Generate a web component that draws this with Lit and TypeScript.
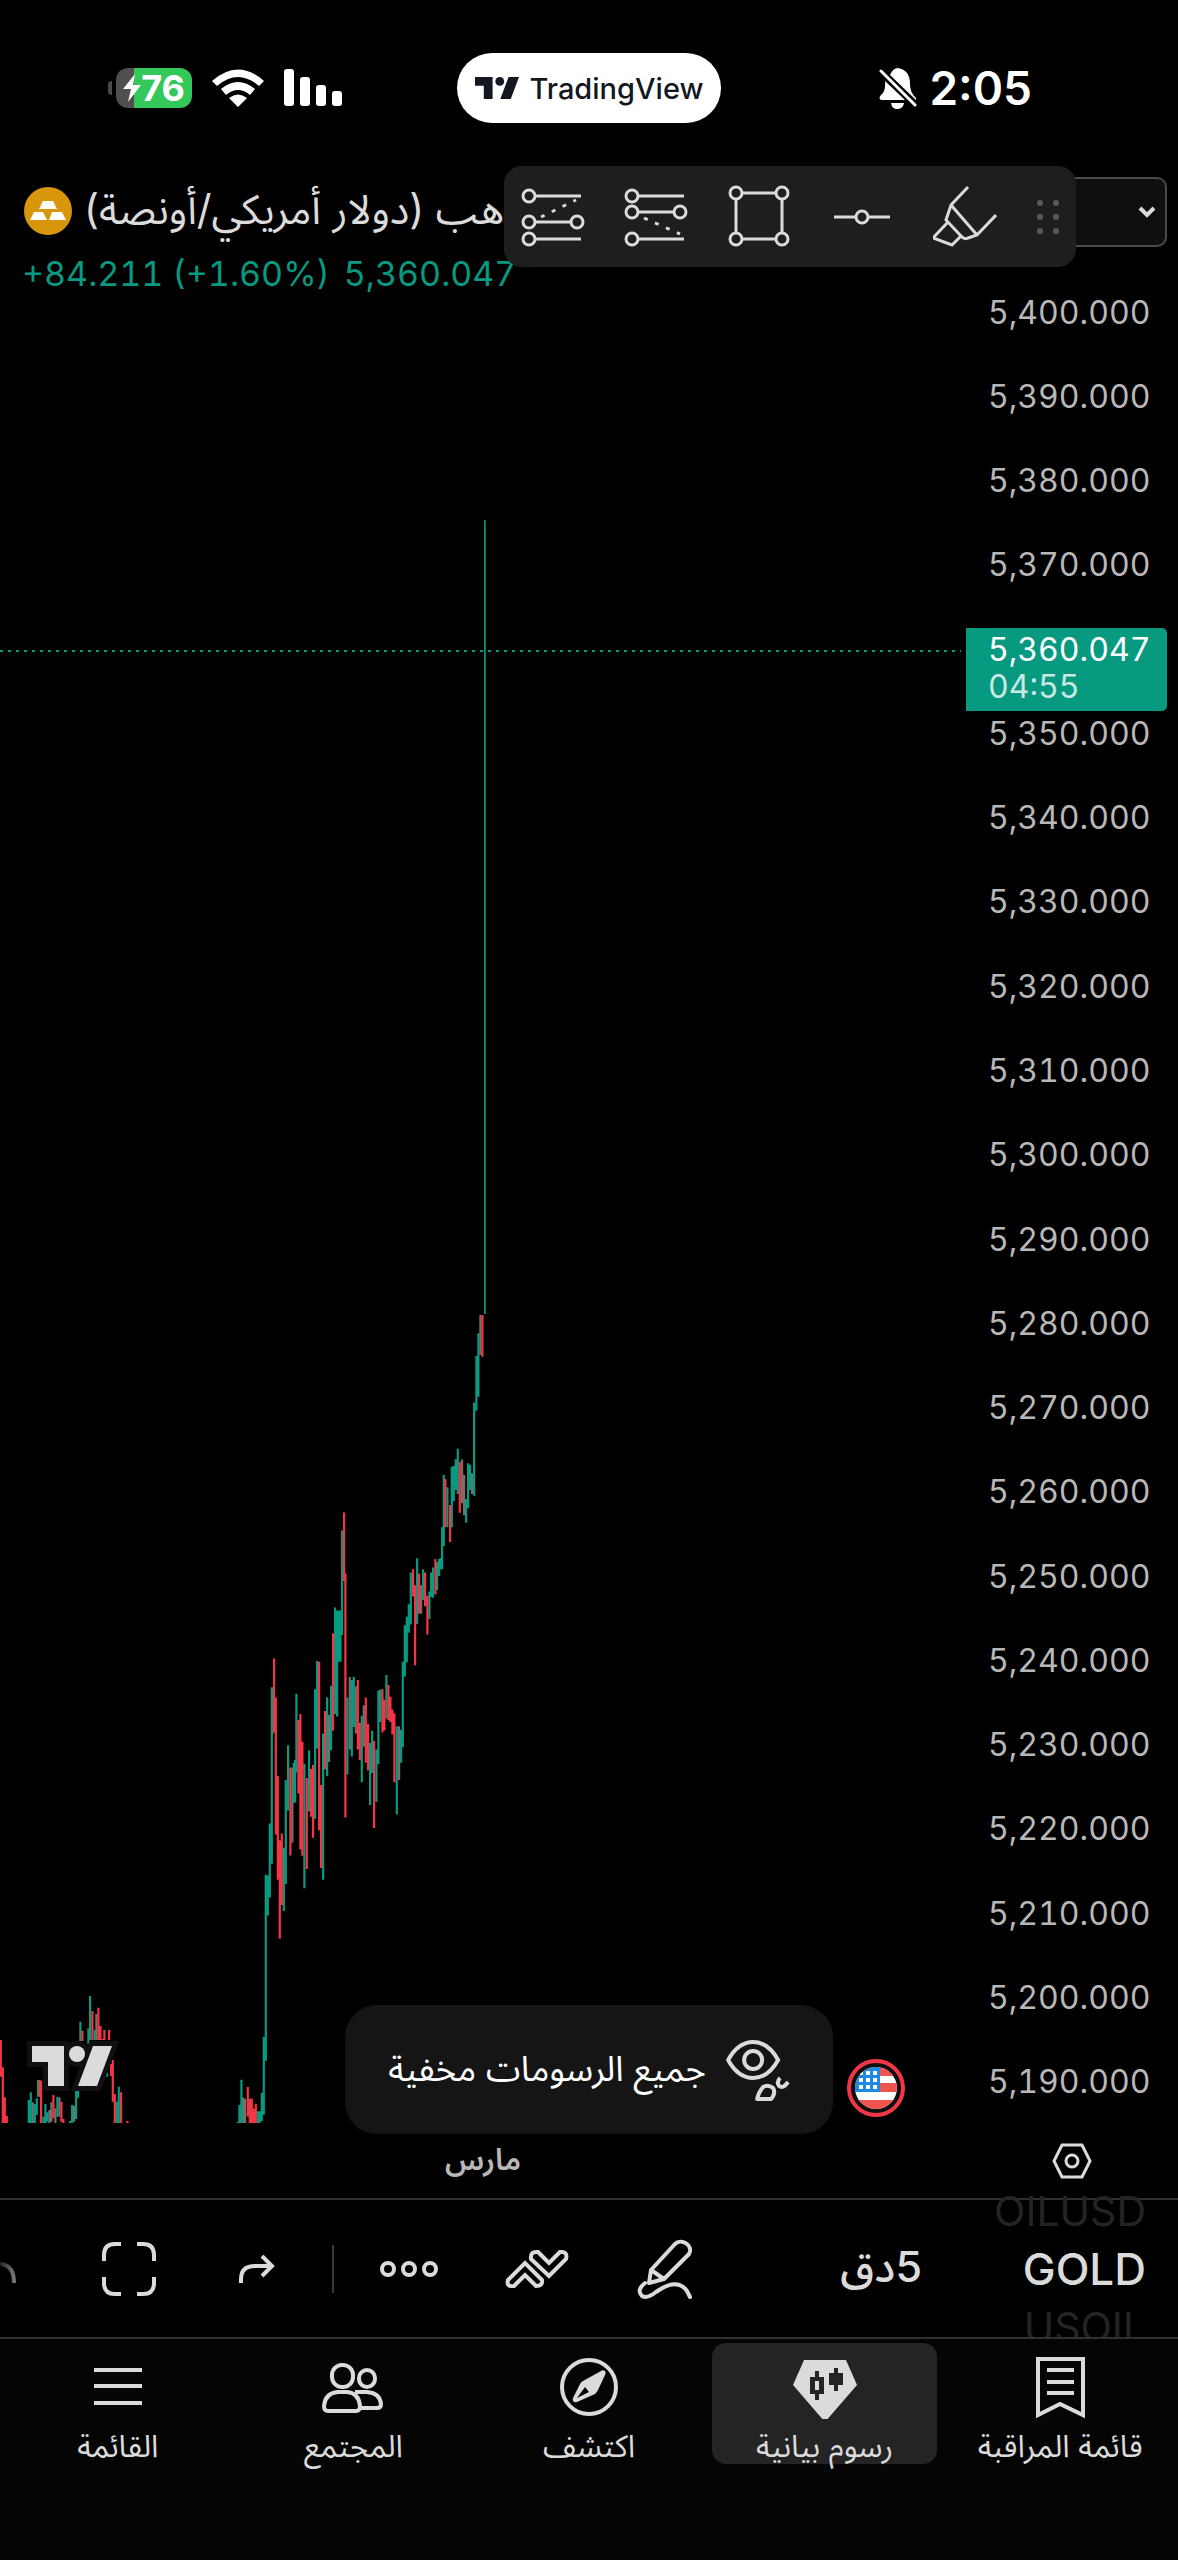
import { LitElement, html, svg, css } from "lit";
import { customElement } from "lit/decorators.js";

type Tone = "g" | "r" | "m";
type Bar = [number, number, number, Tone];

interface Series {
  x: number;
  y: number;
  unitY: number;
  bars: Bar[];
}

/* Bars are [x, high, low, tone] relative to each series origin: x in thirds, y in the series' own unit. */
const SERIES: Series[] = [
  {
    x: 0,
    y: 1940,
    unitY: 3,
    bars: [
      [-1, 300, 410, "r"], [5, 382, 550, "r"], [11, 472, 550, "r"], [17, 527, 550, "r"],
      [83, 480, 550, "g"], [89, 457, 550, "g"], [95, 487, 550, "m"], [101, 492, 550, "g"],
      [107, 475, 525, "g"], [111, 420, 470, "g"], [116, 420, 470, "r"], [120, 423, 550, "r"],
      [127, 530, 550, "g"], [133, 492, 550, "g"], [139, 517, 545, "g"], [145, 510, 550, "m"],
      [151, 487, 545, "m"], [157, 465, 535, "r"], [163, 505, 550, "m"], [169, 470, 530, "g"],
      [175, 472, 530, "m"], [181, 485, 545, "r"], [187, 537, 550, "r"], [207, 543, 550, "g"],
      [213, 495, 550, "g"], [219, 497, 545, "m"], [225, 453, 537, "g"], [231, 453, 473, "g"],
      [238, 245, 303, "g"], [244, 272, 303, "r"], [262, 265, 312, "g"], [267, 168, 300, "g"],
      [274, 213, 300, "r"], [281, 270, 300, "g"], [286, 222, 300, "m"], [292, 203, 300, "r"],
      [298, 258, 300, "r"], [304, 297, 300, "r"], [310, 270, 300, "r"], [324, 270, 300, "r"],
      [318, 398, 410, "g"], [330, 372, 408, "r"], [335, 360, 485, "r"], [341, 462, 550, "r"],
      [347, 485, 550, "g"], [353, 440, 550, "g"], [360, 457, 550, "r"], [379, 543, 550, "r"],
    ],
  },
  {
    x: 230,
    y: 1480,
    unitY: 2.376,
    bars: [
      [20, 1525, 1529, "g"], [25, 1485, 1529, "g"], [31, 1425, 1529, "g"], [36, 1467, 1529, "m"],
      [42, 1470, 1529, "m"], [50, 1442, 1512, "r"], [56, 1470, 1529, "r"], [62, 1470, 1529, "r"],
      [68, 1493, 1529, "r"], [74, 1482, 1529, "r"], [80, 1500, 1529, "g"], [86, 1500, 1527, "g"],
      [92, 1456, 1523, "g"], [98, 1323, 1508, "g"], [104, 938, 1380, "g"], [110, 940, 1035, "g"],
      [116, 816, 992, "g"], [122, 493, 912, "g"], [124, 493, 605, "m"], [129, 424, 600, "r"],
      [134, 517, 842, "r"], [140, 703, 950, "r"], [146, 856, 1090, "r"], [152, 840, 1010, "r"],
      [158, 874, 1024, "g"], [164, 713, 960, "g"], [171, 630, 785, "g"], [178, 683, 892, "r"],
      [184, 683, 862, "m"], [188, 672, 767, "g"], [192, 665, 767, "g"], [196, 508, 695, "g"],
      [202, 570, 745, "r"], [208, 556, 878, "r"], [214, 622, 893, "r"], [220, 674, 970, "g"],
      [227, 708, 924, "r"], [234, 642, 788, "g"], [240, 687, 800, "r"], [246, 677, 850, "r"],
      [252, 497, 805, "g"], [258, 430, 638, "g"], [264, 432, 832, "r"], [270, 725, 922, "r"],
      [276, 602, 950, "g"], [282, 549, 688, "r"], [288, 516, 704, "g"], [294, 558, 670, "m"],
      [300, 489, 642, "g"], [306, 364, 596, "r"], [312, 303, 556, "g"], [318, 310, 562, "g"],
      [324, 310, 432, "g"], [328, 310, 432, "g"], [333, 120, 368, "g"], [336, 120, 240, "m"],
      [339, 77, 240, "r"], [343, 222, 802, "r"], [349, 517, 700, "g"], [356, 468, 640, "m"],
      [362, 475, 657, "g"], [368, 468, 587, "g"], [374, 490, 602, "m"], [380, 475, 640, "r"],
      [386, 577, 665, "r"], [392, 560, 718, "g"], [398, 535, 633, "m"], [404, 517, 672, "r"],
      [411, 580, 690, "r"], [417, 625, 772, "g"], [423, 596, 696, "g"], [429, 620, 827, "r"],
      [436, 640, 765, "g"], [442, 500, 675, "g"], [448, 498, 575, "g"], [454, 497, 600, "r"],
      [460, 522, 595, "r"], [466, 463, 567, "g"], [472, 487, 570, "r"], [478, 515, 575, "r"],
      [484, 545, 605, "r"], [490, 555, 718, "r"], [497, 585, 795, "g"], [504, 585, 713, "m"],
      [510, 594, 672, "g"], [515, 432, 635, "g"], [521, 345, 467, "g"], [527, 325, 433, "g"],
      [533, 295, 363, "g"], [539, 220, 343, "g"], [546, 212, 277, "r"], [552, 250, 440, "r"],
      [558, 186, 342, "g"], [564, 222, 318, "r"], [570, 250, 318, "m"], [576, 212, 285, "g"],
      [582, 220, 300, "r"], [589, 275, 367, "r"], [595, 265, 330, "g"], [600, 220, 278, "g"],
      [606, 208, 280, "g"], [613, 188, 272, "r"], [618, 195, 262, "g"], [624, 187, 228, "g"],
      [630, 185, 212, "g"],
    ],
  },
  {
    x: 390,
    y: 1290,
    unitY: 3,
    bars: [
      [153, 712, 838, "g"], [158, 555, 768, "g"], [163, 567, 712, "r"], [169, 592, 712, "g"],
      [177, 645, 756, "r"], [178, 645, 712, "m"], [182, 530, 712, "g"], [188, 527, 633, "g"],
      [194, 508, 600, "g"], [200, 476, 612, "g"], [206, 515, 668, "r"], [213, 508, 640, "m"],
      [219, 555, 676, "m"], [225, 627, 698, "g"], [231, 520, 655, "g"], [237, 524, 600, "g"],
      [243, 550, 612, "m"], [249, 338, 617, "g"], [256, 198, 362, "g"], [262, 130, 320, "g"],
      [268, 75, 195, "m"], [274, 75, 200, "r"], [282, -2309, 72, "g"],
    ],
  },
];

const barPath = (tone: Tone): string =>
  SERIES.map((s) =>
    s.bars
      .filter((b) => b[3] === tone)
      .map(([x, top, bottom]) => {
        const width = top < 0 ? 1.7 : 2.2;
        const high = (s.y + top / s.unitY).toFixed(1);
        const low = (s.y + bottom / s.unitY).toFixed(1);
        return `M${(s.x + x / 3).toFixed(1)} ${high}h${width}V${low}h-${width}z`;
      })
      .join(""),
  ).join("");

const PRICES = Array.from({ length: 22 }, (_, i) => 5400 - i * 10);
const CURRENT = 5360;

const tvMark = svg`<path d="M0 0H32V40H16V16H0z"/><circle cx="45" cy="8" r="8"/><path d="M61 0H80L65 40H46z"/>`;

const toolIcons = [
  {
    name: "مركز شراء",
    art: svg`<path d="M14 11H60M14 37H50M14 54H60"/><path class="dots" d="M20 32L55 15"/>
      <circle cx="8" cy="11" r="6"/><circle cx="8" cy="37" r="6"/><circle cx="56" cy="37" r="6"/><circle cx="8" cy="54" r="6"/>`,
  },
  {
    name: "مركز بيع",
    art: svg`<path d="M14 11H60M14 27H50M14 54H60"/><path class="dots" d="M20 33L56 49"/>
      <circle cx="8" cy="11" r="6"/><circle cx="8" cy="27" r="6"/><circle cx="56" cy="27" r="6"/><circle cx="8" cy="54" r="6"/>`,
  },
  {
    name: "مستطيل",
    art: svg`<path d="M15 8H49M15 54H49M9 14V48M55 14V48"/>
      <circle cx="9" cy="8" r="6"/><circle cx="55" cy="8" r="6"/><circle cx="9" cy="54" r="6"/><circle cx="55" cy="54" r="6"/>`,
  },
  {
    name: "خط أفقي",
    art: svg`<path d="M4 32H26M38 32H60"/><circle cx="32" cy="32" r="6"/>`,
  },
  {
    name: "قلم تمييز",
    art: svg`<path d="M35 2L18 20L13 35L28 51Q31 55 35 53L44 50L63 30M18 20L44 50M15 37L0 53L19 60L28 51"/>`,
  },
];

const navItems = [
  {
    label: "قائمة المراقبة",
    active: false,
    art: svg`<g class="line"><path d="M10 4H55V60L32 49L10 60z"/><path d="M19 15H46M19 27H46M19 38H46"/></g>`,
  },
  {
    label: "رسوم بيانية",
    active: true,
    art: svg`<path d="M11 5H53L64 30L32 67L0 30z"/>
      <path class="cut" d="M22 16h4v6h5v17h-5v6h-4v-6h-5V22h5zM41 13h4v5h5v12h-5v6h-4v-6h-5V18h5z"/><path d="M22 26h4v9h-4z"/>`,
  },
  {
    label: "اكتشف",
    active: false,
    art: svg`<circle class="line" cx="32" cy="32" r="27"/>
      <path fill-rule="evenodd" d="M44 16C47 14 50 17 48 20L41 35Q40 37 38 39L20 47C17 48 15 46 16 43L23 29Q24 27 26 26zM28 32L20 43L32 37z"/>`,
  },
  {
    label: "المجتمع",
    active: false,
    art: svg`<g class="line"><rect x="11" y="10" width="21" height="22" rx="10"/><rect x="38" y="15" width="16" height="17" rx="8"/>
      <path d="M7 56Q3 56 3 51Q4 38 17 37H26Q38 38 39 51Q39 56 35 56zM34 37H46Q59 38 60 49Q60 53 56 53H39"/></g>`,
  },
  {
    label: "القائمة",
    active: false,
    art: svg`<path class="line" d="M8 15H56M8 31H56M8 48H56"/>`,
  },
];

@customElement("app-root")
export class AppRoot extends LitElement {
  static styles = css`
    :host {
      display: block;
      background: #000;
      color: #dbdbdb;
      font-family: Inter, "Noto Sans Arabic", "Noto Sans", "DejaVu Sans", sans-serif;
    }
    * {
      box-sizing: border-box;
    }
    svg {
      display: block;
      flex: none;
      fill: currentColor;
    }
    button,
    select {
      appearance: none;
      border: 0;
      margin: 0;
      padding: 0;
      background: none;
      color: inherit;
      font: inherit;
      cursor: pointer;
    }
    .screen {
      display: flex;
      flex-direction: column;
      min-height: 100vh;
      overflow: hidden;
    }
    .status {
      display: grid;
      grid-template-columns: 1fr auto 1fr;
      align-items: center;
      padding: 53px 108px 27px;
      color: #fff;
    }
    .status-side {
      display: flex;
      align-items: center;
      gap: 20px;
    }
    .status-end {
      justify-content: flex-end;
      gap: 12px;
      padding-right: 38px;
    }
    .battery {
      display: flex;
      align-items: center;
      gap: 4px;
    }
    .nub {
      width: 4px;
      height: 14px;
      border-radius: 4px 0 0 4px;
      background: #4a4a4c;
    }
    .cell {
      display: flex;
      align-items: center;
      justify-content: flex-end;
      width: 76px;
      height: 40px;
      padding-right: 7px;
      border-radius: 12px;
      background: linear-gradient(to right, #4f4f51 18px, #34c759 18px);
      font-size: 36px;
      font-weight: 700;
      line-height: 40px;
    }
    .pill {
      display: flex;
      align-items: center;
      justify-content: center;
      gap: 11px;
      height: 70px;
      padding: 0 18px;
      border-radius: 35px;
      background: #fff;
      color: #131722;
      font-size: 29px;
      font-weight: 500;
    }
    .clock {
      font-size: 46px;
      font-weight: 600;
      line-height: 56px;
    }
    .chart {
      position: relative;
      display: flex;
      flex: 1;
      min-height: 1200px;
    }
    .plot {
      position: relative;
      flex: 1;
      min-width: 0;
    }
    .candles {
      position: absolute;
      inset: 0;
      width: 100%;
      height: 100%;
    }
    .up {
      fill: #089981;
    }
    .down {
      fill: #f23645;
    }
    .mixed {
      fill: #786f6b;
    }
    .last {
      fill: none;
      stroke: #089981;
      stroke-width: 2;
      stroke-dasharray: 3 5;
    }
    .legend {
      position: relative;
      display: flex;
      flex-direction: column;
      gap: 16px;
      padding: 37px 0 0 24px;
      white-space: nowrap;
    }
    .name {
      display: flex;
      align-items: center;
      gap: 12px;
      height: 48px;
      margin: 0;
      font-size: 41px;
      font-weight: 400;
    }
    .change {
      display: flex;
      gap: 14px;
      margin-left: -2px;
      font-size: 34px;
      font-variant-numeric: tabular-nums;
      line-height: 46px;
      color: #089981;
    }
    .scale {
      width: 212px;
      display: flex;
      flex-direction: column;
      padding: 27px 11px 0 0;
    }
    .currency {
      position: relative;
      display: flex;
    }
    .currency select {
      width: 100%;
      height: 70px;
      padding-left: 16px;
      border: 2px solid #4a4a4a;
      border-radius: 10px;
      background: #0f0f0f;
      font-size: 32px;
    }
    .chevron {
      position: absolute;
      right: 11px;
      top: 26px;
      pointer-events: none;
    }
    .prices {
      display: flex;
      flex: 1;
      flex-direction: column;
      margin: 22px 0 0;
      padding: 0;
      list-style: none;
      font-size: 32px;
      font-variant-numeric: tabular-nums;
      line-height: 37px;
      color: #b8b8b8;
    }
    .price {
      position: relative;
      display: flex;
      flex: 1;
      align-items: center;
      padding: 2px 0 0 22px;
    }
    .tag {
      position: absolute;
      left: 0;
      right: 0;
      top: 22px;
      z-index: 1;
      display: flex;
      flex-direction: column;
      padding: 3px 22px 6px;
      border-radius: 0 5px 5px 0;
      background: #089981;
      color: #fff;
    }
    .countdown {
      color: #c9e9e3;
    }
    .tools {
      position: absolute;
      top: 16px;
      right: 102px;
      z-index: 2;
      display: flex;
      align-items: center;
      gap: 39px;
      width: 572px;
      height: 101px;
      padding: 0 22px 0 17px;
      border-radius: 18px;
      background: #1e1e1e;
    }
    .tools .art {
      fill: none;
      stroke: #dbdbdb;
      stroke-width: 3;
    }
    .tools .dots {
      stroke-dasharray: 4 8;
    }
    .tools .grip {
      margin-left: auto;
      fill: #5a5a5a;
    }
    .mark {
      position: absolute;
      left: 22px;
      bottom: 27px;
    }
    .mark .halo {
      stroke: #101010;
      stroke-width: 10;
      fill: #101010;
    }
    .event {
      position: absolute;
      right: 60px;
      bottom: 5px;
    }
    .toast {
      position: absolute;
      left: 50%;
      bottom: -11px;
      transform: translateX(-50%);
      display: flex;
      align-items: center;
      gap: 20px;
      height: 129px;
      padding: 0 43px;
      border-radius: 32px;
      background: #151516;
      color: #fff;
      font-size: 35px;
      white-space: nowrap;
    }
    .toast svg {
      color: #dbdbdb;
    }
    .line {
      fill: none;
      stroke: currentColor;
      stroke-width: 4;
    }
    .axis {
      display: flex;
      height: 75px;
    }
    .month {
      flex: 1;
      display: flex;
      align-items: center;
      justify-content: center;
      font-size: 30px;
      font-weight: 600;
      color: #b8b8b8;
    }
    .axis-settings {
      display: flex;
      align-items: center;
      justify-content: center;
      width: 212px;
    }
    .bar {
      display: flex;
      align-items: center;
      height: 139px;
      padding-right: 32px;
      border-top: 2px solid #303030;
    }
    .action {
      display: flex;
      align-items: center;
      justify-content: center;
      width: 128px;
      height: 100%;
    }
    .undo {
      justify-content: flex-start;
      width: 65px;
    }
    .divider {
      width: 2px;
      height: 48px;
      margin: 0 11px;
      background: #3a3a3a;
    }
    .interval {
      margin-left: auto;
      font-size: 43px;
      font-weight: 500;
    }
    .wheel {
      display: flex;
      flex-direction: column;
      justify-content: center;
      align-items: flex-end;
      width: 160px;
      height: 100%;
      margin-left: 64px;
      font-size: 44px;
      font-weight: 500;
      line-height: 58px;
    }
    .wheel .faded {
      font-size: 41px;
      font-weight: 400;
      color: #242424;
    }
    .nav {
      display: flex;
      padding: 4px 0 96px;
      border-top: 2px solid #303030;
      background: #050505;
    }
    .nav a {
      display: flex;
      flex: 1;
      flex-direction: column;
      align-items: center;
      height: 121px;
      margin: 0 5px;
      padding-top: 12px;
      border-radius: 14px;
      color: #dbdbdb;
      font-size: 31px;
      line-height: 54px;
      text-decoration: none;
      white-space: nowrap;
    }
    .nav .active {
      background: #242424;
    }
    .cut {
      fill: #242424;
    }
  `;

  private renderStatus() {
    return html`
      <header class="status">
        <div class="status-side">
          <div class="battery">
            <span class="nub"></span>
            <span class="cell">
              <svg width="18" height="28" viewBox="0 0 18 28"><path d="M12 0L0 15H8L5 28L18 11H10z" /></svg>76
            </span>
          </div>
          <svg width="52" height="38" viewBox="0 0 52 38">
            <path d="M26 38L17 29Q26 22 35 29zM14 26L9 20Q26 6 43 20L38 26Q26 16 14 26zM5 17L0 12Q26 -11 52 12L47 17Q26 -1 5 17z" />
          </svg>
          <svg width="58" height="38" viewBox="0 0 58 38">
            <rect x="0" y="0" width="10" height="37" rx="3" /><rect x="16" y="8" width="10" height="29" rx="3" />
            <rect x="32" y="16" width="10" height="21" rx="3" /><rect x="48" y="22" width="10" height="15" rx="3" />
          </svg>
        </div>
        <div class="pill">
          <svg width="44" height="22" viewBox="0 0 80 40">${tvMark}</svg>
          <span>TradingView</span>
        </div>
        <div class="status-side status-end">
          <svg width="38" height="42" viewBox="0 0 38 42">
            <path d="M19 1Q31 3 31 17Q31 26 37 31V33L11 8Q14 1 19 1zM6 14L26 33H2Q-1 31 2 28Q7 24 6 14zM12 36H25Q24 42 18 42Q13 42 12 36z" />
            <path d="M2 4L36 38" stroke="#fff" stroke-width="3" stroke-linecap="round" />
          </svg>
          <time class="clock">2:05</time>
        </div>
      </header>
    `;
  }

  private renderChart() {
    return html`
      <section class="chart">
        <div class="plot">
          <svg class="candles" viewBox="0 150 966 1973" preserveAspectRatio="none">
            <path class="mixed" d=${barPath("m")} />
            <path class="up" d=${barPath("g")} />
            <path class="down" d=${barPath("r")} />
            <path class="last" d="M0 651H961" />
          </svg>
          <div class="legend">
            <h1 class="name">
              <svg width="48" height="48" viewBox="0 0 48 48">
                <circle cx="24" cy="24" r="24" fill="#d8970a" />
                <path fill="#fff" d="M19 14H29L33 22H15zM10 25H19L23 33H6zM28 25H38L42 33H25z" />
              </svg>
              <span dir="rtl">ذهب (دولار أمريكي/أونصة)</span>
            </h1>
            <div class="change"><span>+84.211 (+1.60%)</span><span>5,360.047</span></div>
          </div>
          <svg class="mark" width="100" height="60" viewBox="-10 -10 100 60">
            <g class="halo">${tvMark}</g>
            ${tvMark}
          </svg>
          <svg class="event" width="60" height="60" viewBox="0 0 60 60">
            <clipPath id="disc"><circle cx="30" cy="30" r="21" /></clipPath>
            <circle cx="30" cy="30" r="27" fill="#0f0f0f" stroke="#f23645" stroke-width="4" />
            <g clip-path="url(#disc)">
              <path fill="#fff" d="M9 9H51V51H9z" />
              <path fill="#ef5350" d="M9 9H51V18H9zM9 25H51V34H9zM9 42H51V51H9z" />
              <path fill="#1e88e5" d="M9 9H34V34H9z" />
              <path fill="none" stroke="#fff" stroke-width="4" stroke-dasharray="4 3" d="M13 15H33M13 22H33M13 29H33" />
            </g>
          </svg>
        </div>
        <div class="scale">
          <label class="currency">
            <select aria-label="العملة"><option>USD</option></select>
            <svg class="chevron" width="18" height="18" viewBox="0 0 18 18">
              <path class="line" d="M2 5L9 12L16 5" />
            </svg>
          </label>
          <ol class="prices">
            ${PRICES.map((p) =>
              p === CURRENT
                ? html`<li class="price"><div class="tag"><span>5,360.047</span><span class="countdown">04:55</span></div></li>`
                : html`<li class="price">${p.toLocaleString("en-US", { minimumFractionDigits: 3 })}</li>`,
            )}
          </ol>
        </div>
        <div class="tools" role="toolbar">
          ${toolIcons.map(
            (t) => html`<button aria-label=${t.name}>
              <svg class="art" width="64" height="64" viewBox="0 0 64 64">${t.art}</svg>
            </button>`,
          )}
          <svg class="grip" width="24" height="36" viewBox="0 0 24 36">
            ${[4, 18, 32].map((y) => svg`<circle cx="4" cy=${y} r="3"/><circle cx="20" cy=${y} r="3"/>`)}
          </svg>
        </div>
        <div class="toast" role="status">
          <span dir="rtl">جميع الرسومات مخفية</span>
          <svg width="64" height="64" viewBox="0 0 64 64">
            <g class="line">
              <path d="M2 22Q12 4 27 4Q42 4 52 22Q42 40 27 40Q12 40 2 22z" /><circle cx="27" cy="22" r="9" />
              <path stroke-linejoin="round" d="M31 61Q32 55 37 49Q42 46 47 50Q50 55 45 61zM54 40Q50 44 53 48Q57 51 62 44" />
            </g>
          </svg>
        </div>
      </section>
      <div class="axis">
        <span class="month">مارس</span>
        <button class="axis-settings" aria-label="الإعدادات">
          <svg width="40" height="36" viewBox="0 0 40 36">
            <path fill="none" stroke="currentColor" stroke-width="3" d="M10 2H30L38 18L30 34H10L2 18z" />
            <circle fill="none" stroke="currentColor" stroke-width="3" cx="20" cy="18" r="6" />
          </svg>
        </button>
      </div>
    `;
  }

  private renderBar() {
    return html`
      <div class="bar">
        <button class="action undo" aria-label="تراجع">
          <svg width="18" height="28" viewBox="0 0 18 28">
            <defs>
              <linearGradient id="fade"><stop offset="0" stop-color="#222" /><stop offset="1" stop-color="#777" /></linearGradient>
            </defs>
            <path fill="none" stroke="url(#fade)" stroke-width="4" d="M0 9Q14 10 14 28" />
          </svg>
        </button>
        <button class="action" aria-label="ملء الشاشة">
          <svg width="56" height="56" viewBox="0 0 56 56">
            <path class="line" d="M3 20V14Q3 3 14 3H20M36 3H42Q53 3 53 14V20M53 36V42Q53 53 42 53H36M20 53H14Q3 53 3 42V36" />
          </svg>
        </button>
        <button class="action" aria-label="إعادة">
          <svg width="36" height="28" viewBox="0 0 36 28">
            <path class="line" d="M2 28V24Q2 11 16 11H33M23 1L33 11L23 21" />
          </svg>
        </button>
        <span class="divider"></span>
        <button class="action" aria-label="المزيد">
          <svg width="58" height="18" viewBox="0 0 58 18">
            <g class="line"><circle cx="8" cy="9" r="6" /><circle cx="29" cy="9" r="6" /><circle cx="50" cy="9" r="6" /></g>
          </svg>
        </button>
        <button class="action" aria-label="المؤشرات">
          <svg width="64" height="40" viewBox="0 0 64 40">
            <path
              class="line"
              d="M3 31L20 14L37 31Q38 37 31 37L20 26L9 37Q1 38 3 31zM26 10Q25 2 33 3L44 14L55 3Q63 2 61 10L44 27z"
            />
          </svg>
        </button>
        <button class="action" aria-label="الرسم">
          <svg width="56" height="60" viewBox="0 0 56 60">
            <path class="line" d="M14 31L38 5C44 -1 57 6 52 15L27 40L12 44zM14 31L27 40M8 44Q-1 51 5 57Q10 60 19 53Q40 38 50 52L53 58" stroke-linejoin="round" stroke-linecap="round" />
          </svg>
        </button>
        <button class="interval" dir="rtl">5دق</button>
        <div class="wheel">
          <span class="faded">OILUSD</span>
          <span>GOLD</span>
          <span class="faded">USOIL</span>
        </div>
      </div>
    `;
  }

  render() {
    return html`
      <main class="screen">
        ${this.renderStatus()} ${this.renderChart()} ${this.renderBar()}
        <nav class="nav" dir="rtl">
          ${navItems.map(
            (n) => html`<a href="#" class=${n.active ? "active" : ""}>
              <svg width="64" height="64" viewBox="0 0 64 64">${n.art}</svg>
              <span>${n.label}</span>
            </a>`,
          )}
        </nav>
      </main>
    `;
  }
}
